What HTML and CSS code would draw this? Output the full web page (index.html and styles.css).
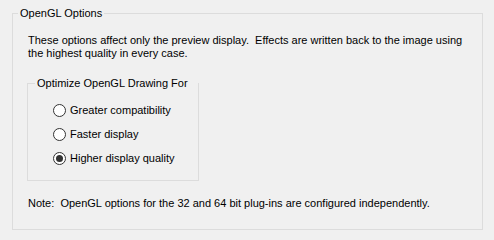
FILE: index.html
```html
<!DOCTYPE html>
<html>
<head>
<meta charset="utf-8">
<link rel="stylesheet" href="styles.css">
</head>
<body>
<fieldset class="outer">
  <legend class="outer-legend">OpenGL Options</legend>
  <p class="intro">These options affect only the preview display.&nbsp; Effects are written back to the image using the highest quality in every case.</p>
  <fieldset class="inner">
    <legend class="inner-legend">Optimize OpenGL Drawing For</legend>
    <div class="radios">
      <label class="radio"><span class="dot"></span><span class="label">Greater compatibility</span></label>
      <label class="radio"><span class="dot"></span><span class="label">Faster display</span></label>
      <label class="radio"><span class="dot checked"></span><span class="label">Higher display quality</span></label>
    </div>
  </fieldset>
  <p class="note">Note:&nbsp; OpenGL options for the 32 and 64 bit plug-ins are configured independently.</p>
</fieldset>
</body>
</html>
```
FILE: styles.css
```css
html, body {
  margin: 0;
  padding: 0;
  background: #f0f0f0;
}
body {
  font-family: "Liberation Sans", Arial, sans-serif;
  font-size: 11px;
  color: #000;
  padding: 6px 0 0 12px;
}
.outer {
  box-sizing: border-box;
  width: 471px;
  height: 224px;
  margin: 0;
  padding: 0 15px 0 15px;
  border: 1px solid #dcdcdc;
  min-width: 0;
}
.outer-legend {
  margin-left: -10px;
  padding: 0 2px;
  line-height: 14px;
  white-space: nowrap;
}
.intro {
  margin: 14px 0 0 0;
  line-height: 13px;
  width: 440px;
}
.inner {
  box-sizing: border-box;
  width: 172px;
  height: 105px;
  margin: 16px 0 0 -1px;
  padding: 0 0 0 25px;
  border: 1px solid #dcdcdc;
  min-width: 0;
}
.inner-legend {
  margin-left: -18px;
  padding: 0 10px 0 2px;
  line-height: 14px;
  white-space: nowrap;
}
.radios {
  display: flex;
  flex-direction: column;
  padding-top: 8px;
}
.radio {
  display: flex;
  align-items: center;
  height: 24px;
  gap: 4px;
  white-space: nowrap;
}
.dot {
  box-sizing: border-box;
  width: 13px;
  height: 13px;
  border: 1px solid #333;
  border-radius: 50%;
  background: #fff;
  display: flex;
  align-items: center;
  justify-content: center;
  flex: none;
}
.dot.checked::after {
  content: "";
  width: 7px;
  height: 7px;
  border-radius: 50%;
  background: #333;
}
.note {
  margin: 16px 0 0 0;
  line-height: 13px;
}
```
